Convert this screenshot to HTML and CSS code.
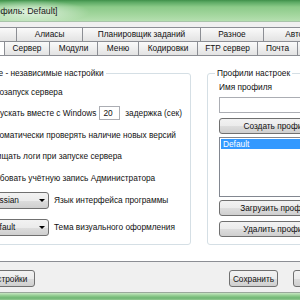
FILE: index.html
```html
<!DOCTYPE html>
<html lang="ru">
<head>
    <meta charset="UTF-8">
    <title>Опции [Профиль: Default]</title>
    <link rel="stylesheet" href="styles.css">
</head>
<body>
    <div class="window">
        <div class="titlebar">
            <span class="title">Опции [Профиль: Default]</span>
        </div>

        <div class="client">
            <!-- Вкладки в два ряда -->
            <div class="tabs">
                <div class="tab-row">
                    <span class="tab tab-log">Лог</span>
                    <span class="tab tab-alias">Алиасы</span>
                    <span class="tab tab-sched">Планировщик заданий</span>
                    <span class="tab tab-misc">Разное</span>
                    <span class="tab tab-auto">Автозапуск</span>
                </div>
                <div class="tab-row">
                    <span class="tab tab-active tab-common">Общие</span>
                    <span class="tab tab-server">Сервер</span>
                    <span class="tab tab-modules">Модули</span>
                    <span class="tab tab-menu">Меню</span>
                    <span class="tab tab-enc">Кодировки</span>
                    <span class="tab tab-ftp">FTP сервер</span>
                    <span class="tab tab-mail">Почта</span>
                    <span class="tab tab-web">Web</span>
                </div>
            </div>

            <div class="panel">
                <fieldset class="group group-main">
                    <legend>Профиле - независимые настройки</legend>
                    <label class="check-row"><span class="checkbox"></span>Автозапуск сервера</label>
                    <label class="check-row">
                        <span class="checkbox"></span>
                        <span class="delay-label">Запускать вместе с Windows</span>
                        <span class="num-input">20</span>
                        <span class="after-input">задержка (сек)</span>
                    </label>
                    <label class="check-row"><span class="checkbox"></span>Автоматически проверять наличие новых версий</label>
                    <label class="check-row"><span class="checkbox"></span>Очищать логи при запуске сервера</label>
                    <label class="check-row"><span class="checkbox"></span>Требовать учётную запись Администратора</label>
                    <div class="combo-row">
                        <span class="combo">Russian<span class="combo-arrow"></span></span>
                        <span class="combo-label">Язык интерфейса программы</span>
                    </div>
                    <div class="combo-row combo-row-last">
                        <span class="combo">Default<span class="combo-arrow"></span></span>
                        <span class="combo-label">Тема визуального оформления</span>
                    </div>
                </fieldset>

                <fieldset class="group group-profiles">
                    <legend>Профили настроек</legend>
                    <div class="field-label">Имя профиля</div>
                    <div class="text-input"></div>
                    <button class="btn btn-create">Создать профиль</button>
                    <div class="listbox">
                        <div class="list-item selected">Default</div>
                    </div>
                    <button class="btn btn-load">Загрузить профиль</button>
                    <button class="btn btn-delete">Удалить профиль</button>
                </fieldset>
            </div>

            <div class="footer">
                <button class="btn btn-footer btn-settings">Настройки</button>
                <button class="btn btn-footer btn-save">Сохранить</button>
                <button class="btn btn-footer btn-cancel">Отмена</button>
            </div>
        </div>

        <div class="frame-bottom"></div>
    </div>
</body>
</html>
```

FILE: styles.css
```css
* {
    box-sizing: border-box;
}

html,
body {
    margin: 0;
    overflow: hidden; /* окно шире экрана */
}

body {
    font-family: "Liberation Sans", Arial, sans-serif;
    font-size: 8.3px;
    color: #111;
    background: #f0f0f0;
}

/* Окно сдвинуто влево, как на снимке */
.window {
    width: 400px;
    margin-left: -50px;
    display: flex;
    flex-direction: column;
}

.titlebar {
    height: 22px;
    border-bottom: 1px solid #a9c4aa;
    background:
        radial-gradient(ellipse 60px 12px at 80px 12px, rgba(255, 255, 255, 0.7), rgba(255, 255, 255, 0)),
        linear-gradient(to bottom, #3f8f49 0, #5aa862 2px, #8ccb89 7px, #a3d69e 15px, #b5dfb0 21px);
}

.title {
    display: block;
    padding-left: 3px;
    line-height: 22px;
    font-size: 8.8px;
    color: #1a1a1a;
}

.client {
    padding-top: 5px;
}

/* Вкладки */
.tab-row {
    display: flex;
    height: 14px;
    padding-left: 2px;
}

.tab {
    flex: 0 0 auto;
    height: 14px;
    line-height: 13px;
    text-align: center;
    white-space: nowrap;
    border: 1px solid #8c8e94;
    border-right: none;
    border-bottom: none;
    background: linear-gradient(to bottom, #fafafa, #e3e3e3);
}

.tab:last-child {
    border-right: 1px solid #8c8e94;
}

.tab-active {
    background: #fff;
}

.tab-log { width: 64px; }
.tab-alias { width: 66px; }
.tab-sched { width: 118px; }
.tab-misc { width: 63px; }
.tab-auto { width: 87px; }

.tab-common { width: 52px; }
.tab-server { width: 45px; }
.tab-modules { width: 48px; }
.tab-menu { width: 41px; }
.tab-enc { width: 59px; }
.tab-ftp { width: 60px; }
.tab-mail { width: 40px; }
.tab-web { width: 53px; }

/* Содержимое вкладки */
.panel {
    display: flex;
    gap: 16px;
    background: #fff;
    border: 1px solid #8c8e94;
    padding: 11px 0 16px 9px;
}

.group {
    margin: 0;
    min-width: 0;
    border: 1px solid #d5dfe5;
    border-radius: 3px;
}

.group legend {
    padding: 0 2px;
    margin-left: -4px;
    line-height: 12px;
}

.group-main {
    width: 231px;
    padding: 2px 8px 8px;
}

.group-profiles {
    width: 141px;
    padding: 2px 11px 7px;
}

.check-row {
    display: flex;
    align-items: center;
    height: 21.5px;
    white-space: nowrap;
}

.checkbox {
    width: 13px;
    height: 13px;
    margin-right: 4px;
    border: 1px solid #8f8f8f;
    background: linear-gradient(to bottom, #f4f4f4, #ffffff);
}

.delay-label {
    width: 114px;
}

.num-input {
    width: 21px;
    height: 14px;
    line-height: 12px;
    padding-left: 3px;
    border: 1px solid #abadb3;
    background: #fff;
}

.after-input {
    margin-left: 5px;
}

.combo-row {
    display: flex;
    align-items: center;
    margin-top: 3px;
    white-space: nowrap;
}

.combo-row-last {
    margin-top: 10px;
}

.combo {
    display: flex;
    align-items: center;
    justify-content: space-between;
    width: 63px;
    height: 17px;
    margin-left: 17px;
    padding: 0 3px 0 2px;
    border: 1px solid #707070;
    border-radius: 3px;
    background: linear-gradient(to bottom, #f2f2f2 0%, #ebebeb 50%, #dddddd 51%, #cfcfcf 100%);
}

.combo-arrow {
    width: 0;
    height: 0;
    border-left: 3px solid transparent;
    border-right: 3px solid transparent;
    border-top: 3px solid #000;
}

.combo-label {
    margin-left: 5px;
}

.field-label {
    line-height: 13px;
    white-space: nowrap;
}

.text-input {
    height: 16px;
    margin-top: 3px;
    border: 1px solid #abadb3;
    background: #fff;
}

.btn {
    display: block;
    height: 16px;
    padding: 0;
    font-family: inherit;
    font-size: 8.3px;
    color: #111;
    white-space: nowrap;
    border: 1px solid #707070;
    border-radius: 3px;
    background: linear-gradient(to bottom, #f2f2f2 0%, #ebebeb 50%, #dddddd 51%, #cfcfcf 100%);
}

.group-profiles .btn {
    width: 100%;
}

.btn-create { margin-top: 5px; }
.btn-load { margin-top: 3px; }
.btn-delete { margin-top: 5px; }

.listbox {
    height: 60px;
    margin-top: 3px;
    padding: 1px;
    border: 1px solid #828790;
    background: #fff;
}

.list-item {
    line-height: 10px;
    padding-left: 2px;
}

.list-item.selected {
    background: #3399ff;
    color: #fff;
}

/* Нижняя панель кнопок */
.footer {
    display: flex;
    padding: 8px 7px 5px 29px;
}

.btn-footer {
    height: 17px;
}

.btn-settings { width: 56px; }
.btn-save { width: 49px; margin-left: auto; }
.btn-cancel { width: 50px; margin-left: 15px; }

.frame-bottom {
    height: 8px;
    border-top: 1px solid #9aa89b;
    background: linear-gradient(to bottom, #c8e7c3 0, #8cc98a 3px, #6fb573 5px, #a6d6a1 8px);
}
```
